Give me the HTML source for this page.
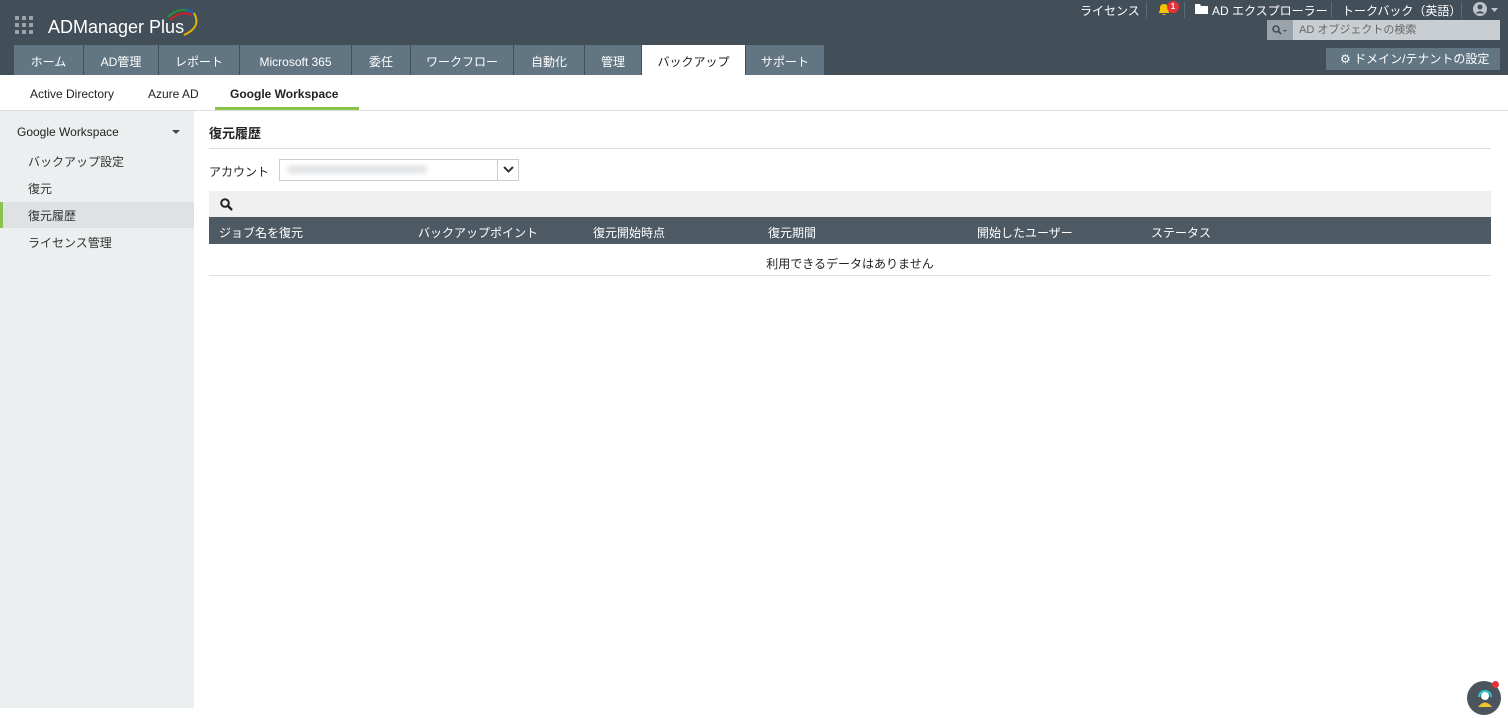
<!DOCTYPE html><html><head><meta charset="utf-8"><style>
*{margin:0;padding:0;box-sizing:border-box}
body{width:1508px;height:718px;overflow:hidden;background:#fff;font-family:"Liberation Sans","Noto Sans CJK JP",sans-serif;font-size:12px;color:#222;position:relative}
.a{position:absolute}
#hdr{left:0;top:0;width:1508px;height:75px;background:#434f58}
.tab{position:absolute;top:45px;height:30px;background:#617583;color:#fff;font-size:12px;line-height:34px;text-align:center}
.tab.on{background:#fff;color:#222}
.tr{color:#fff;font-size:12px;top:2px}
.sep{top:2px;width:1px;height:16px;background:#5d6a73}
.side{left:0;top:111px;width:194px;height:597px;background:#eceff0}
.si{position:absolute;left:28px;font-size:12px;color:#333}
.th{position:absolute;top:224px;color:#fff;font-size:12px}
</style></head><body>
<div id="hdr" class="a">
<svg class="a" style="left:15px;top:16px" width="19" height="19"><g fill="#9aa3aa"><rect x="0" y="0" width="4" height="4"/><rect x="7" y="0" width="4" height="4"/><rect x="14" y="0" width="4" height="4"/><rect x="0" y="7" width="4" height="4"/><rect x="7" y="7" width="4" height="4"/><rect x="14" y="7" width="4" height="4"/><rect x="0" y="14" width="4" height="4"/><rect x="7" y="14" width="4" height="4"/><rect x="14" y="14" width="4" height="4"/></g></svg>
<div class="a" style="left:48px;top:17px;color:#fff;font-size:18px;">ADManager Plus</div>
<svg class="a" style="left:162px;top:5px" width="40" height="32"><path d="M6 12 Q16 2 28 6" stroke="#2a8f3a" stroke-width="2" fill="none"/><path d="M8 15 Q18 5 30 10" stroke="#c8202a" stroke-width="2" fill="none"/><path d="M24 4 Q36 8 34 20" stroke="#1e5fb0" stroke-width="2" fill="none"/><path d="M32 8 Q40 22 22 30" stroke="#e8b500" stroke-width="2" fill="none"/></svg>
<div class="a tr" style="left:1080px">ライセンス</div>
<div class="a sep" style="left:1146px"></div>
<svg class="a" style="left:1157px;top:2px" width="14" height="14"><path d="M2 11 L2 10 Q3 9 3 6 Q3 2 7 2 Q11 2 11 6 Q11 9 12 10 L12 11Z M5 12 Q7 14 9 12Z" fill="#f5c400"/></svg>
<div class="a" style="left:1167px;top:1px;width:12px;height:12px;border-radius:6px;background:#e8323a;color:#fff;font-size:8px;line-height:12px;text-align:center;font-weight:bold">1</div>
<div class="a sep" style="left:1184px"></div>
<svg class="a" style="left:1195px;top:4px" width="13" height="10"><path d="M0 0h5l1 2h7v8H0z" fill="#fff"/></svg>
<div class="a tr" style="left:1212px">AD エクスプローラー</div>
<div class="a sep" style="left:1331px"></div>
<div class="a tr" style="left:1342px">トークバック（英語）</div>
<div class="a sep" style="left:1461px"></div>
<svg class="a" style="left:1473px;top:2px" width="28" height="14"><circle cx="7" cy="7" r="7" fill="#bfc5ca"/><circle cx="7" cy="5" r="2.5" fill="#434f58"/><path d="M2.5 11.5 Q7 7 11.5 11.5" fill="#434f58"/><path d="M18 6h7l-3.5 4z" fill="#bfc5ca"/></svg>
<div class="a" style="left:1267px;top:20px;width:26px;height:20px;background:#9aa3aa"></div>
<svg class="a" style="left:1272px;top:25px" width="16" height="10"><circle cx="4" cy="4" r="3" stroke="#434f58" stroke-width="1.6" fill="none"/><path d="M6 6l3 3" stroke="#434f58" stroke-width="1.8"/><path d="M11 5h4l-2 2z" fill="#434f58"/></svg>
<div class="a" style="left:1293px;top:20px;width:207px;height:20px;background:#c9ced2;color:#666;font-size:11px;line-height:20px;padding-left:6px">AD オブジェクトの検索</div>
<div class="a" style="left:1326px;top:48px;width:174px;height:22px;background:#617583;color:#fff;font-size:12px;line-height:22px;padding-left:14px">⚙ ドメイン/テナントの設定</div>
<div class="tab" style="left:14px;width:69px">ホーム</div>
<div class="tab" style="left:84px;width:74px">AD管理</div>
<div class="tab" style="left:159px;width:80px">レポート</div>
<div class="tab" style="left:240px;width:111px">Microsoft 365</div>
<div class="tab" style="left:352px;width:58px">委任</div>
<div class="tab" style="left:411px;width:102px">ワークフロー</div>
<div class="tab" style="left:514px;width:70px">自動化</div>
<div class="tab" style="left:585px;width:56px">管理</div>
<div class="tab on" style="left:642px;width:103px">バックアップ</div>
<div class="tab" style="left:746px;width:78px">サポート</div>
</div>
<div class="a" style="left:30px;top:87px;font-size:12px">Active Directory</div>
<div class="a" style="left:148px;top:87px;font-size:12px">Azure AD</div>
<div class="a" style="left:230px;top:87px;font-size:12px;font-weight:bold">Google Workspace</div>
<div class="a" style="left:215px;top:107px;width:144px;height:3px;background:#8bc34a"></div>
<div class="a" style="left:0;top:110px;width:1508px;height:1px;background:#ddd"></div>
<div class="a side"></div>
<div class="a" style="left:17px;top:125px;font-size:12px;color:#222">Google Workspace</div>
<div class="a" style="left:172px;top:130px;border:4px solid transparent;border-top:4px solid #444;border-bottom:0"></div>
<div class="si" style="top:153px">バックアップ設定</div>
<div class="si" style="top:180px">復元</div>
<div class="a" style="left:0;top:202px;width:194px;height:26px;background:#dfe2e4"></div>
<div class="a" style="left:0;top:202px;width:3px;height:26px;background:#8bc34a"></div>
<div class="si" style="top:207px">復元履歴</div>
<div class="si" style="top:234px">ライセンス管理</div>
<div class="a" style="left:209px;top:123px;font-size:13px;font-weight:bold">復元履歴</div>
<div class="a" style="left:209px;top:148px;width:1282px;height:1px;background:#ddd"></div>
<div class="a" style="left:209px;top:163px">アカウント</div>
<div class="a" style="left:279px;top:159px;width:240px;height:22px;border:1px solid #ccc"></div>
<div class="a" style="left:287px;top:165px;width:140px;height:9px;background:#e4e6e8;border-radius:4px;filter:blur(2px)"></div>
<div class="a" style="left:497px;top:159px;width:1px;height:22px;background:#ccc"></div>
<svg class="a" style="left:503px;top:166px" width="11" height="8"><path d="M1 1l4.5 4.5L10 1" stroke="#333" stroke-width="2" fill="none"/></svg>
<div class="a" style="left:209px;top:191px;width:1282px;height:26px;background:#f0f0f0"></div>
<svg class="a" style="left:220px;top:198px" width="13" height="13"><circle cx="5" cy="5" r="3.8" stroke="#222" stroke-width="2" fill="none"/><path d="M8 8l4 4" stroke="#222" stroke-width="2.4"/></svg>
<div class="a" style="left:209px;top:217px;width:1282px;height:27px;background:#4d5a63"></div>
<div class="th" style="left:219px">ジョブ名を復元</div>
<div class="th" style="left:418px">バックアップポイント</div>
<div class="th" style="left:593px">復元開始時点</div>
<div class="th" style="left:768px">復元期間</div>
<div class="th" style="left:977px">開始したユーザー</div>
<div class="th" style="left:1151px">ステータス</div>
<div class="a" style="left:209px;top:255px;width:1282px;text-align:center">利用できるデータはありません</div>
<div class="a" style="left:209px;top:275px;width:1282px;height:1px;background:#e2e2e2"></div>
<div class="a" style="left:1467px;top:681px;width:34px;height:34px;border-radius:17px;background:#4a555d"></div>
<svg class="a" style="left:1474px;top:687px" width="22" height="22"><path d="M5 10a6 6 0 0 1 12 0" stroke="#2ec4d6" stroke-width="2" fill="none"/><circle cx="11" cy="9" r="4" fill="#fff"/><path d="M4 20q7-9 14 0z" fill="#f4c430"/></svg>
<div class="a" style="left:1492px;top:681px;width:7px;height:7px;border-radius:4px;background:#e8323a"></div>
</body></html>
